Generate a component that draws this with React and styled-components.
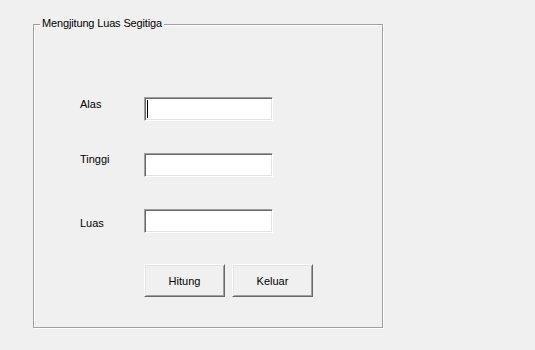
import React from "react";
import styled, { createGlobalStyle } from "styled-components";

const Global = createGlobalStyle`
  html, body {
    margin: 0;
    padding: 0;
    background: #f0f0f0;
  }
  body {
    font-family: "Liberation Sans", Arial, sans-serif;
    font-size: 11px;
    color: #000;
  }
`;

const Window = styled.div`
  width: 535px;
  height: 350px;
  background: #f0f0f0;
  padding: 24px 0 0 33px;
  box-sizing: border-box;
  overflow: hidden;
`;

const Group = styled.div`
  position: relative;
  box-sizing: border-box;
  width: 350px;
  height: 304px;
  border: 1px solid #a0a0a0;
  box-shadow: inset 1px 1px 0 #ffffff, 1px 1px 0 #ffffff;
  padding: 72px 0 0 46px;
  display: flex;
  flex-direction: column;
`;

const Legend = styled.span`
  position: absolute;
  top: -8px;
  left: 6px;
  padding: 0 2px;
  background: #f0f0f0;
  line-height: 13px;
  font-size: 11px;
  letter-spacing: -0.15px;
  white-space: nowrap;
`;

const Rows = styled.div`
  display: flex;
  flex-direction: column;
  gap: 32px;
`;

const Row = styled.div`
  display: flex;
  align-items: flex-start;
  height: 24px;
`;

const Label = styled.span`
  width: 64px;
  line-height: 13px;
  margin-top: ${(p) => p.$offset}px;
`;

const TextBox = styled.div`
  position: relative;
  box-sizing: border-box;
  width: 129px;
  height: 24px;
  background: #ffffff;
  border: 1px solid;
  border-color: #a0a0a0 #ffffff #ffffff #a0a0a0;
  box-shadow: inset 1px 1px 0 #696969, inset -1px -1px 0 #e3e3e3;
`;

const Caret = styled.span`
  position: absolute;
  left: 2px;
  top: 2px;
  width: 1px;
  height: 18px;
  background: #000;
`;

const Buttons = styled.div`
  display: flex;
  gap: 7px;
  margin: 31px 0 0 64px;
`;

const Button = styled.button`
  box-sizing: border-box;
  width: ${(p) => p.$w}px;
  height: 33px;
  padding: 0;
  background: #f0f0f0;
  border: 1px solid;
  border-color: #ffffff #696969 #696969 #ffffff;
  box-shadow: inset 1px 1px 0 #e3e3e3, inset -1px -1px 0 #a0a0a0;
  font-family: "Liberation Sans", Arial, sans-serif;
  font-size: 11px;
  color: #000;
  display: flex;
  align-items: center;
  justify-content: center;
`;

const fields = [
  { label: "Alas", offset: 1, caret: true },
  { label: "Tinggi", offset: 0 },
  { label: "Luas", offset: 8 },
];

export default function App() {
  return (
    <>
      <Global />
      <Window>
        <Group>
          <Legend>Mengjitung Luas Segitiga</Legend>
          <Rows>
            {fields.map((f) => (
              <Row key={f.label}>
                <Label $offset={f.offset}>{f.label}</Label>
                <TextBox>{f.caret && <Caret />}</TextBox>
              </Row>
            ))}
          </Rows>
          <Buttons>
            <Button $w={81}>Hitung</Button>
            <Button $w={81}>Keluar</Button>
          </Buttons>
        </Group>
      </Window>
    </>
  );
}
